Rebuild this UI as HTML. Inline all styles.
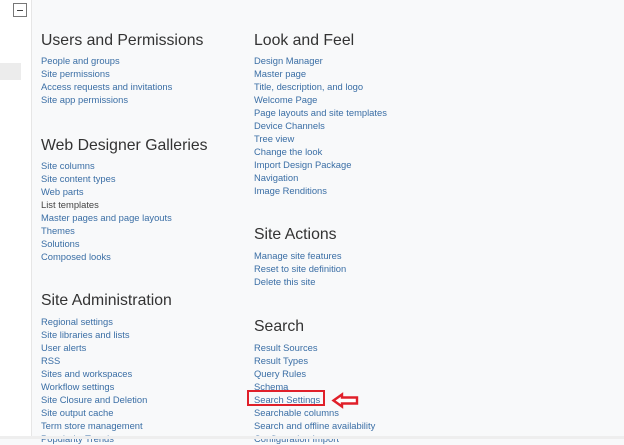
<!DOCTYPE html>
<html><head><style>
body{margin:0;width:624px;height:439px;overflow:hidden;background:#f8f9fa;font-family:"Liberation Sans",sans-serif;position:relative}
.left{position:absolute;left:0;top:0;width:31px;height:436px;background:#fff;border-right:1px solid #e6e6e6}
.gbar{position:absolute;left:0;top:63px;width:21px;height:17px;background:#ececec}
.box{position:absolute;left:13px;top:3px;width:12px;height:12px;border:1px solid #777;background:#fff}
.box:after{content:"";position:absolute;left:3px;top:5.5px;width:6px;height:1px;background:#444}
.sec{position:absolute}
.sec h2{margin:0;font-weight:normal;font-size:15.8px;color:#333;line-height:20px;height:20px;padding-top:1px}
.sec div{font-size:9.4px;color:#3a6ea5;line-height:13px}
.sec div.b{color:#444}
.bottom{position:absolute;left:0;top:436px;width:624px;height:3px;background:#eee}
</style></head><body>
<div class="left"><div class="gbar"></div></div>
<div class="box"></div>
<div class="sec" style="left:41px;top:30px"><h2>Users and Permissions</h2><div style="margin-top:3px">
<div>People and groups</div><div>Site permissions</div><div>Access requests and invitations</div><div>Site app permissions</div></div></div>
<div class="sec" style="left:41px;top:135px"><h2>Web Designer Galleries</h2><div style="margin-top:3px">
<div>Site columns</div><div>Site content types</div><div>Web parts</div><div class="b">List templates</div><div>Master pages and page layouts</div><div>Themes</div><div>Solutions</div><div>Composed looks</div></div></div>
<div class="sec" style="left:41px;top:290px"><h2>Site Administration</h2><div style="margin-top:4px">
<div>Regional settings</div><div>Site libraries and lists</div><div>User alerts</div><div>RSS</div><div>Sites and workspaces</div><div>Workflow settings</div><div>Site Closure and Deletion</div><div>Site output cache</div><div>Term store management</div><div>Popularity Trends</div></div></div>
<div class="sec" style="left:254px;top:30px"><h2>Look and Feel</h2><div style="margin-top:3px">
<div>Design Manager</div><div>Master page</div><div>Title, description, and logo</div><div>Welcome Page</div><div>Page layouts and site templates</div><div>Device Channels</div><div>Tree view</div><div>Change the look</div><div>Import Design Package</div><div>Navigation</div><div>Image Renditions</div></div></div>
<div class="sec" style="left:254px;top:224px"><h2>Site Actions</h2><div style="margin-top:4px">
<div>Manage site features</div><div>Reset to site definition</div><div>Delete this site</div></div></div>
<div class="sec" style="left:254px;top:316px"><h2>Search</h2><div style="margin-top:4px">
<div>Result Sources</div><div>Result Types</div><div>Query Rules</div><div>Schema</div><div>Search Settings</div><div>Searchable columns</div><div>Search and offline availability</div><div>Configuration Import</div></div></div>
<div style="position:absolute;left:247px;top:390px;width:78px;height:16px;border:2px solid #e0202a;box-sizing:border-box"></div>
<svg style="position:absolute;left:331px;top:392px" width="29" height="17" viewBox="0 0 29 17"><path d="M2.5 8.5 L11 2.5 L11 5.5 L26 5.5 L26 11.5 L11 11.5 L11 14.5 Z" fill="#fff" stroke="#e0202a" stroke-width="2.4" stroke-linejoin="miter"/></svg>
<div class="bottom"></div>
</body></html>
